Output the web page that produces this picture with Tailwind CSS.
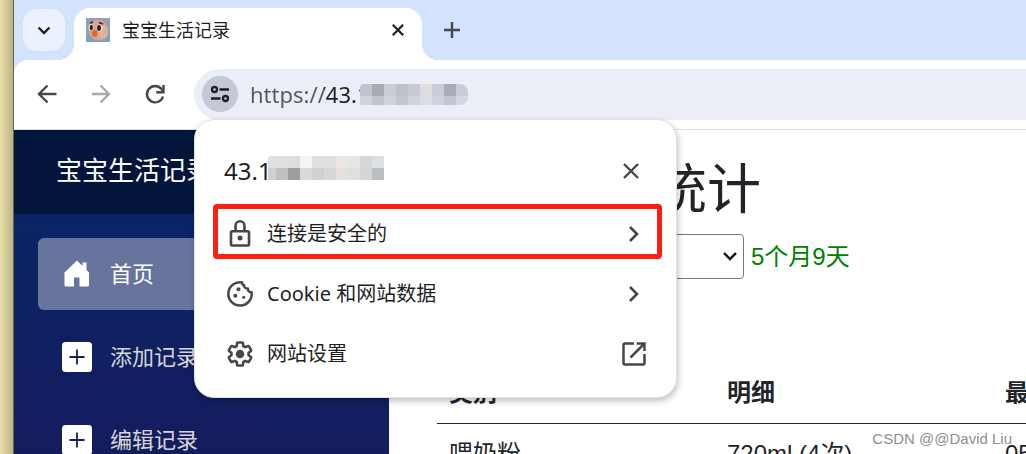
<!DOCTYPE html>
<html lang="zh-CN">

<head>
  <meta charset="UTF-8">
  <meta name="viewport" content="width=device-width, initial-scale=1.0">
  <title>宝宝生活记录</title>
  <script src="https://cdn.jsdelivr.net/npm/@tailwindcss/browser@4"></script>
</head>

<body class="relative flex h-screen overflow-hidden bg-white font-['Noto_Sans','Noto_Sans_CJK_SC',sans-serif] text-[#1f1f1f]">

  <!-- Desktop edge -->
  <div class="w-[14px] shrink-0 border-r border-[#66654f] bg-linear-to-r from-[#e9dfa8] to-[#bdb286]"></div>

  <div class="relative flex min-w-0 flex-1 flex-col">

    <!-- Tabs -->
    <div class="flex h-[60px] shrink-0 bg-[#d3e2fd] pl-[9px]">
      <button aria-label="搜索标签页" class="mt-[9px] flex size-[42px] items-center justify-center rounded-[14px] bg-[#ebf1fe]">
        <svg class="size-4" viewBox="0 0 16 16" fill="none" stroke="#1f1f1f" stroke-width="2.4"><path d="M2.5 5.5 8 11l5.5-5.5" /></svg>
      </button>
      <div class="relative mt-2 ml-[9px] flex w-[348px] items-center rounded-t-[16px] bg-white px-3 pb-2">
        <span class="absolute bottom-0 -left-4 size-4 bg-[radial-gradient(circle_at_0_0,transparent_16px,white_16px)]"></span>
        <span class="absolute -right-4 bottom-0 size-4 bg-[radial-gradient(circle_at_100%_0,transparent_16px,white_16px)]"></span>
        <svg class="size-6" viewBox="0 0 24 24">
          <path fill="#8ea2ba" d="M0 0h24v24H0z" />
          <path fill="#7e9fc0" d="M0 17h24v7H0z" />
          <ellipse cx="12.500" cy="12" rx="9.500" ry="10.500" fill="#d7a58c" />
          <ellipse cx="17" cy="14" rx="5" ry="7" fill="#e0b29c" />
          <ellipse cx="5" cy="9.500" rx="2.400" ry="3.400" fill="#e8e4e2" />
          <ellipse cx="13.500" cy="10" rx="3" ry="3.600" fill="#e8e4e2" />
          <ellipse cx="5.300" cy="9.500" rx="1.600" ry="2.800" fill="#2c2428" />
          <ellipse cx="13" cy="10" rx="2" ry="3" fill="#2c2428" />
          <path d="M4 5l3-1M13 4.500l4 1.500" stroke="#3c2a28" stroke-width="1.400" />
          <ellipse cx="8.800" cy="15.500" rx="2.800" ry="3.400" fill="#e8642c" />
        </svg>
        <span class="ml-3 flex-1 text-[18px] leading-6">宝宝生活记录</span>
        <button aria-label="关闭标签页" class="flex size-6 items-center justify-center">
          <svg class="size-4" viewBox="0 0 16 16" fill="none" stroke="#1f1f1f" stroke-width="2.2"><path d="M2.800 2.800l10.400 10.400M13.200 2.800 2.800 13.200" /></svg>
        </button>
      </div>
      <button aria-label="新标签页" class="ml-5 flex h-[60px] w-5 items-center justify-center">
        <svg class="size-5" viewBox="0 0 20 20" fill="none" stroke="#45484d" stroke-width="2.400"><path d="M10 2v16M2 10h16" /></svg>
      </button>
    </div>

    <!-- Toolbar -->
    <div class="shrink-0 bg-[#d3e2fd]">
      <div class="flex h-[70px] items-center rounded-tl-[14px] border-b border-[#dfe1e5] bg-white pb-px pl-[21px]">
        <button aria-label="后退" class="size-6">
          <svg viewBox="0 0 24 24" fill="none" stroke="#474747" stroke-width="2.4"><path d="M21.500 12H4.500M12.500 3.500 4 12l8.500 8.500" /></svg>
        </button>
        <button aria-label="前进" class="ml-[30px] size-6" disabled>
          <svg viewBox="0 0 24 24" fill="none" stroke="#a9a9a9" stroke-width="2.4"><path d="M3 12h16.500M11.500 3.500 20 12l-8.500 8.500" /></svg>
        </button>
        <button aria-label="重新加载" class="ml-[30px] size-6">
          <svg viewBox="0 0 24 24" fill="none" stroke="#474747" stroke-width="2.4"><path d="M20 14.500A8.200 8.200 0 1 1 18.500 7L20 9" /><path d="M20.500 3v7.300h-7.300" /></svg>
        </button>
        <div class="relative ml-[27px] flex h-[51px] flex-1 items-center rounded-l-full bg-[#ebeef7] pl-2">
          <button aria-label="查看网站信息" class="flex size-9 items-center justify-center rounded-full bg-[#c3c9d6]">
            <svg class="size-6" viewBox="0 0 24 24" fill="none" stroke="#1f1f1f" stroke-width="2.300"><circle cx="6.500" cy="7.500" r="2.500" /><path d="M11.500 7.500H21M3 16.500h9.500" /><circle cx="17.500" cy="16.500" r="2.500" /></svg>
          </button>
          <input aria-label="地址" value="https://43.1" class="ml-3 w-[118px] bg-[linear-gradient(to_right,#55575b_74px,#1f1f1f_74px)] bg-clip-text text-[22px] leading-7 text-transparent outline-none">
          <div class="absolute top-[15px] left-[166px] grid grid-cols-[repeat(9,12px)] grid-rows-[12px_9px] overflow-hidden rounded-r-[8px] rounded-tl-[4px]">
            <i class="bg-[#c0c4d0]"></i><i class="bg-[#a9abb1]"></i><i class="bg-[#c9cdd6]"></i><i class="bg-[#bcc3c8]"></i><i class="bg-[#c8c9d4]"></i><i class="bg-[#dddcde]"></i><i class="bg-[#c9cdd8]"></i><i class="bg-[#a9adb7]"></i><i class="bg-[#c8ccd6]"></i>
            <i class="bg-[#d0d2dd]"></i><i class="bg-[#c2c3ce]"></i><i class="bg-[#d0d3dd]"></i><i class="bg-[#c1c7cc]"></i><i class="bg-[#d0d2df]"></i><i class="bg-[#dddce2]"></i><i class="bg-[#ced2de]"></i><i class="bg-[#c3c6d2]"></i><i class="bg-[#d3d7e1]"></i>
          </div>
        </div>
      </div>
    </div>

    <!-- Page -->
    <div class="flex min-h-0 flex-1 overflow-hidden">

      <aside class="flex w-[375px] shrink-0 flex-col bg-[linear-gradient(180deg,#052767_0,#151c5e_330px)] text-[22px] text-[#d7d7d7]">
        <div class="flex h-[84px] shrink-0 items-center bg-[#03153a] pb-1 pl-[42px]">
          <a href="#" class="text-[26px] text-white">宝宝生活记录</a>
        </div>
        <nav class="flex flex-col gap-[11px] p-6">
          <a href="#" class="flex h-[72px] shrink-0 items-center gap-[18px] rounded-[6px] bg-[#67749c] pl-6 text-white">
            <svg class="size-[30px]" viewBox="0 0 30 30" fill="#fff"><path d="M15 1.500 2.500 13.500V26a1.500 1.500 0 0 0 1.500 1.500h8v-9h5.500v9h8A1.500 1.500 0 0 0 27 26V13.500l-2.500-2.500V3.500h-4V7z" /></svg>
            <span class="pb-0.5">首页</span>
          </a>
          <a href="#" class="flex h-[72px] shrink-0 items-center gap-[18px] pl-6">
            <svg class="size-[30px]" viewBox="0 0 30 30"><rect width="30" height="30" rx="3.500" fill="#fff" /><path d="M15 7.500v15M7.500 15h15" stroke="#10205f" stroke-width="1.800" /></svg>
            <span class="pb-0.5">添加记录</span>
          </a>
          <a href="#" class="flex h-[72px] shrink-0 items-center gap-[18px] pl-6">
            <svg class="size-[30px]" viewBox="0 0 30 30"><rect width="30" height="30" rx="3.500" fill="#fff" /><path d="M15 7.500v15M7.500 15h15" stroke="#10205f" stroke-width="1.800" /></svg>
            <span class="pb-0.5">编辑记录</span>
          </a>
        </nav>
      </aside>

      <main class="min-w-0 flex-1 overflow-hidden px-12 pt-[26px] font-['Liberation_Sans','Noto_Sans_CJK_SC',sans-serif] text-2xl text-[#212529]">
        <h1 class="text-[54px] leading-[68px] whitespace-nowrap">宝宝生活统计</h1>
        <div class="mt-[10px] flex items-center gap-[7px]">
          <div class="relative w-[307px]">
            <select aria-label="宝宝" class="h-[45px] w-full appearance-none rounded-[4px] border border-[#767676] bg-white px-3">
              <option>宝宝</option>
            </select>
            <svg class="pointer-events-none absolute top-[14px] right-[6px] size-4" viewBox="0 0 16 16" fill="none" stroke="#000" stroke-width="2.400"><path d="M2 5l6 6 6-6" /></svg>
          </div>
          <span class="text-[#008000]">5个月9天</span>
        </div>
        <table class="mt-[84px] w-[1112px] table-fixed text-left leading-9">
          <thead>
            <tr class="border-b border-[#212529]">
              <th class="p-3">类别</th>
              <th class="p-3">明细</th>
              <th class="p-3">最近</th>
              <th class="p-3"></th>
            </tr>
          </thead>
          <tbody>
            <tr>
              <td class="p-3">喂奶粉</td>
              <td class="p-3">720ml (4次)</td>
              <td class="p-3">05</td>
              <td class="p-3"></td>
            </tr>
          </tbody>
        </table>
      </main>
    </div>

    <!-- Site info popup -->
    <div role="dialog" aria-label="网站信息" class="absolute top-[119px] left-[180px] w-[483px] rounded-[20px] border border-[#dfe1e3] bg-white pt-6 pb-[13px] text-[20px] shadow-[1px_3px_6px_rgba(0,0,0,0.25)]">
      <div class="relative flex h-[60px] items-center justify-between pr-[31px] pb-[6px] pl-[29px]">
        <h2 class="text-[24px] leading-8">43.1</h2>
        <div class="absolute top-3 left-[73px] grid grid-cols-[8px_repeat(9,12px)] grid-rows-[12px_12px] overflow-hidden rounded-tl-[4px]">
          <i class="bg-[#dfe0df]"></i><i class="bg-[#dedfe1]"></i><i class="bg-[#dcdde0]"></i><i class="bg-[#f4f4f4]"></i><i class="bg-[#dfdfe0]"></i><i class="bg-[#dee0df]"></i><i class="bg-[#ece7e5]"></i><i class="bg-[#e5e6e8]"></i><i class="bg-[#d8d7d3]"></i><i class="bg-[#dedfe5]"></i>
          <i class="bg-[#d1d0cb]"></i><i class="bg-[#bfc0be]"></i><i class="bg-[#9d9d9f]"></i><i class="bg-[#dbd8d6]"></i><i class="bg-[#cfd0d4]"></i><i class="bg-[#d8d7d4]"></i><i class="bg-[#e9dfdf]"></i><i class="bg-[#dddfe3]"></i><i class="bg-[#d4d5d8]"></i><i class="bg-[#b9bec4]"></i>
        </div>
        <button aria-label="关闭" class="size-7">
          <svg viewBox="0 0 28 28" fill="none" stroke="#474747" stroke-width="2.400"><path d="M7 7l14 14M21 7 7 21" /></svg>
        </button>
      </div>
      <button class="flex h-[60px] w-full items-center gap-3 pr-[27px] pl-[30px]">
        <svg class="size-[30px]" viewBox="0 0 30 30" fill="none" stroke="#474747" stroke-width="2.600"><rect x="6" y="12.300" width="18" height="14.200" rx="1.200" /><path d="M10.500 12V7a4.500 4.700 0 0 1 9 0v5" /><circle cx="15" cy="19" r="2.500" fill="#474747" stroke="none" /></svg>
        <span class="flex-1 text-left">连接是安全的</span>
        <svg class="size-[30px]" viewBox="0 0 30 30" fill="none" stroke="#474747" stroke-width="2.600"><path d="M11 8l7 7-7 7" /></svg>
      </button>
      <button class="flex h-[60px] w-full items-center gap-3 pr-[27px] pl-[30px]">
        <svg class="size-[30px]" viewBox="0 0 30 30" fill="none" stroke="#474747" stroke-width="2.500"><path d="M17.300 3.400A11.700 11.700 0 1 0 26.600 13.200C24.500 13.500 22.700 12 22.800 9.500 20.500 9.700 18.800 8.300 19 6 17.500 6 17 5 17.300 3.400z" stroke-linejoin="round" /><g fill="#474747" stroke="none"><circle cx="13.500" cy="10.300" r="2" /><circle cx="10.300" cy="16.700" r="2" /><circle cx="18.700" cy="18.300" r="1.500" /></g></svg>
        <span class="flex-1 text-left">Cookie 和网站数据</span>
        <svg class="size-[30px]" viewBox="0 0 30 30" fill="none" stroke="#474747" stroke-width="2.600"><path d="M11 8l7 7-7 7" /></svg>
      </button>
      <button class="flex h-[60px] w-full items-center gap-3 pr-[27px] pl-[30px]">
        <svg class="size-[30px]" viewBox="-1 -1 26 26" fill="none" stroke="#474747" stroke-width="2.200"><path d="M19.430 12.980c.04-.32.07-.64.07-.98s-.03-.66-.07-.98l2.110-1.650c.19-.15.24-.42.12-.64l-2-3.460c-.09-.16-.26-.25-.44-.25-.06 0-.12.01-.17.03l-2.490 1c-.52-.4-1.080-.73-1.690-.98l-.38-2.650C14.460 2.180 14.250 2 14 2h-4c-.25 0-.46.18-.49.42l-.38 2.650c-.61.25-1.170.59-1.690.98l-2.490-1c-.06-.02-.12-.03-.18-.03-.17 0-.34.09-.43.25l-2 3.460c-.13.22-.07.49.12.64l2.110 1.650c-.04.32-.07.65-.07.98s.03.66.07.98l-2.110 1.650c-.19.15-.24.42-.12.64l2 3.460c.09.16.26.25.44.25.06 0 .12-.01.17-.03l2.490-1c.52.4 1.080.73 1.690.98l.38 2.650c.03.24.24.42.49.42h4c.25 0 .46-.18.49-.42l.38-2.650c.61-.25 1.170-.59 1.690-.98l2.490 1c.06.02.12.03.18.03.17 0 .34-.09.43-.25l2-3.460c.12-.22.07-.49-.12-.64z" /><circle cx="12" cy="12" r="3.700" fill="#474747" stroke="none" /></svg>
        <span class="flex-1 text-left">网站设置</span>
        <svg class="size-[30px]" viewBox="0 0 30 30" fill="none" stroke="#474747" stroke-width="2.500"><path d="M15 4.500H6A1.500 1.500 0 0 0 4.500 6v18A1.500 1.500 0 0 0 6 25.500h18a1.500 1.500 0 0 0 1.500-1.500v-9M17.700 4.500h7.800V12M25 5 11.500 18.500" /></svg>
      </button>
      <!-- Highlight -->
      <div class="pointer-events-none absolute top-[84px] right-[14px] left-[18px] h-[55px] rounded-[4px] border-[5px] border-[#ff1f12]"></div>
    </div>
  </div>

  <p class="absolute right-[14px] bottom-[3px] font-['Liberation_Sans',sans-serif] text-[15px] leading-6 text-[#8f8f8f]">CSDN @@David Liu</p>

</body>

</html>
